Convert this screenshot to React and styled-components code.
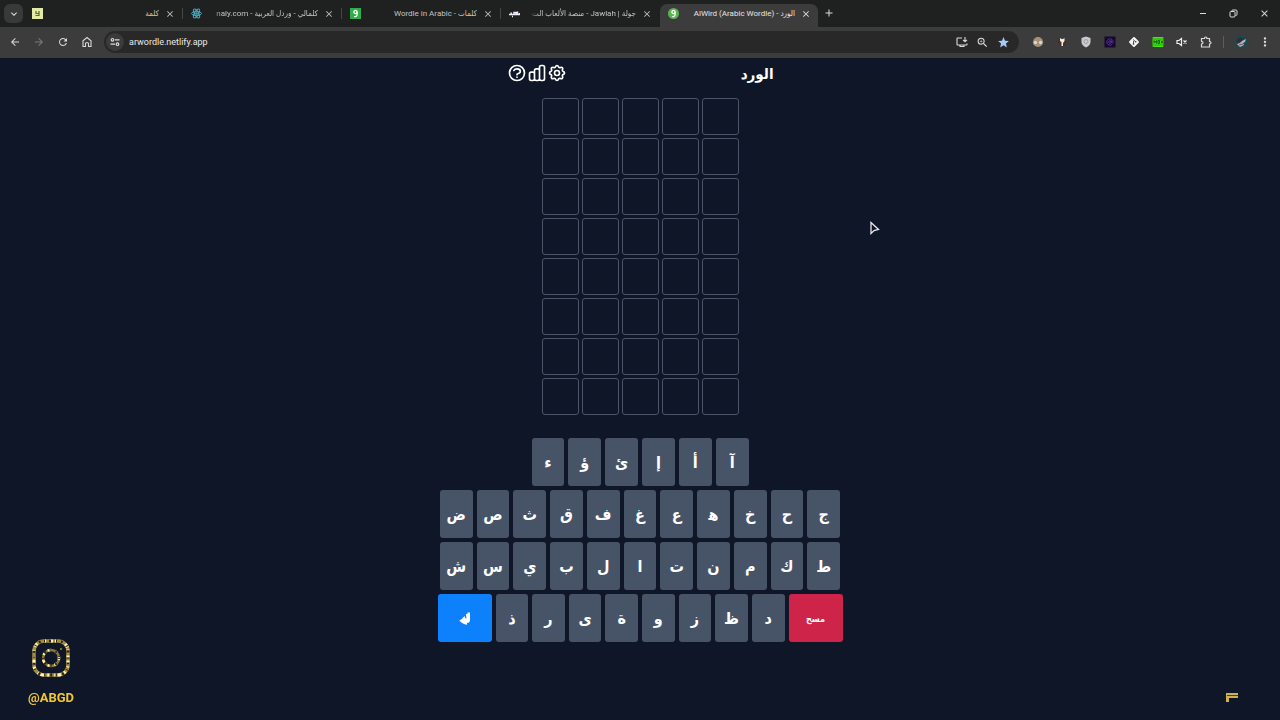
import React from 'react';
import styled, { createGlobalStyle } from 'styled-components';
import { HiOutlineCog, HiOutlineChartBar, HiOutlineQuestionMarkCircle } from 'react-icons/hi';
import {
    MdArrowBack,
    MdArrowForward,
    MdRefresh,
    MdClose,
    MdAdd,
    MdKeyboardArrowDown,
    MdOutlineZoomIn,
    MdStar,
    MdMoreVert
} from 'react-icons/md';

const GlobalStyle = createGlobalStyle`
    * {
        box-sizing: border-box;
    }
    body {
        margin: 0;
        background-color: #0f1627;
        font-family: "Noto Sans", "DejaVu Sans Condensed", "DejaVu Sans", sans-serif;
    }
    button {
        font-family: inherit;
        border: none;
        padding: 0;
        margin: 0;
        color: inherit;
        background: none;
        cursor: pointer;
    }
`

const Page = styled.div`
    min-height: 100vh;
    display: flex;
    flex-direction: column;
`

const TabStrip = styled.div`
    display: flex;
    align-items: flex-end;
    height: 27px;
    padding-left: 4px;
    background-color: #1f2020;
    color: #dcdcdc;
`

const TabSearch = styled.button`
    display: flex;
    align-items: center;
    justify-content: center;
    width: 19px;
    height: 19px;
    margin: 0 1px 4px 0;
    border-radius: 6px;
    background-color: #393939;
`

const Tab = styled.div`
    display: flex;
    align-items: center;
    gap: 6px;
    width: 158px;
    height: 23px;
    padding: 0 7px 4px 8px;
    border-radius: 7px 7px 0 0;
    background-color: ${props => props.$active ? "#3c3c3c" : "transparent"};
    color: ${props => props.$active ? "#e6e6e6" : "#c4c4c4"};
`

const TabDivider = styled.span`
    width: 1px;
    height: 11px;
    margin-bottom: 8px;
    background-color: ${props => props.$visible ? "#444444" : "transparent"};
`

const TabTitle = styled.span`
    flex: 1;
    min-width: 0;
    overflow: hidden;
    white-space: nowrap;
    direction: rtl;
    font-family: Roboto, "DejaVu Sans Condensed", "DejaVu Sans", sans-serif;
    font-size: 8px;
    line-height: 14px;
    mask-image: ${props => props.$fade ? "linear-gradient(to right, transparent, #000 14px)" : "none"};
`

const IconButton = styled.button`
    display: flex;
    align-items: center;
    justify-content: center;
    width: ${props => props.$width || 24}px;
    height: 20px;
    color: ${props => props.$dim ? "#7a7a7a" : "#dadada"};
`

const TabClose = styled.button`
    display: flex;
    width: 10px;
    height: 10px;
`

const NewTab = styled.button`
    display: flex;
    margin: 0 0 8px 4px;
`

const WindowControls = styled.div`
    display: flex;
    margin-left: auto;
    padding-bottom: 4px;
`

const Toolbar = styled.div`
    display: flex;
    align-items: center;
    height: 31px;
    padding: 0 3px 1px;
    background-color: #3c3c3c;
`

const AddressBar = styled.div`
    flex: 1;
    display: flex;
    align-items: center;
    height: 22px;
    margin: 0 7px 0 5px;
    padding: 0 5px 0 2px;
    border-radius: 11px;
    background-color: #282828;
`

const SiteInfo = styled.button`
    display: flex;
    align-items: center;
    justify-content: center;
    width: 18px;
    height: 18px;
    border-radius: 9px;
    background-color: #3b3b3b;
`

const Address = styled.input`
    flex: 1;
    min-width: 0;
    margin-left: 5px;
    padding: 0;
    border: none;
    outline: none;
    background: none;
    color: #e8e8e8;
    font-family: Roboto, "Noto Sans", sans-serif;
    font-size: 9px;
`

const ToolbarDivider = styled.span`
    width: 1px;
    height: 12px;
    margin: 0 5px;
    background-color: #5c5c5c;
`

const Game = styled.main`
    flex: 1;
    display: flex;
    flex-direction: column;
    align-items: center;
    padding-top: 4px;
`

const GameHeader = styled.header`
    display: flex;
    align-items: center;
    justify-content: space-between;
    width: 267px;
    height: 22px;
    color: #ffffff;
`

const Title = styled.h1`
    margin: 0;
    font-size: 15px;
    line-height: 24px;
    font-weight: bold;
`

const HeaderIcons = styled.div`
    display: flex;
`

const HeaderButton = styled.button`
    display: flex;
    font-size: 20px;
`

const Board = styled.div`
    display: grid;
    grid-template-columns: repeat(5, 37px);
    grid-auto-rows: 37px;
    gap: 3px;
    margin-top: 14px;
`

const Cell = styled.div`
    border: 1px solid #4b5567;
    border-radius: 3px;
`

const Keyboard = styled.div`
    display: flex;
    flex-direction: column;
    align-items: center;
    gap: 4px;
    margin-top: 23px;
`

const KeyRow = styled.div`
    display: flex;
    gap: 4px;
    width: ${props => props.$width}px;
`

const Key = styled.button`
    flex: ${props => props.$wide ? "0 0 54px" : "1 1 0"};
    display: flex;
    align-items: center;
    justify-content: center;
    height: 48px;
    border-radius: 3px;
    background-color: ${props => props.$color || "#475467"};
    color: #ffffff;
    font-size: ${props => props.$wide ? 9 : 16}px;
    font-weight: bold;
`

const Handle = styled.a`
    position: fixed;
    left: 28px;
    bottom: 12px;
    display: flex;
    flex-direction: column;
    align-items: center;
    gap: 11px;
    color: #f2c62f;
    font-family: Roboto, "Liberation Sans", sans-serif;
    font-size: 13px;
    line-height: 20px;
    font-weight: bold;
    text-decoration: none;
`

const CornerMark = styled.svg`
    position: fixed;
    right: 42px;
    bottom: 17px;
`

const Pointer = styled.svg`
    position: fixed;
    left: 869px;
    top: 221px;
`

const tabs = [
    { title: "كلمة", icon: "note", divider: true },
    { title: "كلمالي - وردل العربية - naly.com", icon: "react", divider: true, fade: true },
    { title: "كلمات - Wordle in Arabic", icon: "square", divider: true },
    { title: "جولة | Jawlah - منصة الألعاب الت", icon: "jawlah", fade: true },
    { title: "الورد - AlWird (Arabic Wordle)", icon: "round", active: true }
];

// rows are listed right to left, heh carries a joiner to get its initial form
const keyRows = [
    { width: 217, keys: ["آ", "أ", "إ", "ئ", "ؤ", "ء"] },
    { width: 400, keys: ["ج", "ح", "خ", "ه\u200D", "ع", "غ", "ف", "ق", "ث", "ص", "ض"] },
    { width: 400, keys: ["ط", "ك", "م", "ن", "ت", "ا", "ل", "ب", "ي", "س", "ش"] },
    { width: 405, keys: ["delete", "د", "ظ", "ز", "و", "ة", "ى", "ر", "ذ", "enter"] }
];

function Favicon({ name }) {
    switch (name) {
        case "note":
            return (
                <svg width="11" height="11" viewBox="0 0 11 11">
                    <rect width="11" height="11" fill="#e3eaa5" />
                    <path d="M4 3v2.5h3.2M7 3v4.5H3.5" fill="none" stroke="#5f6534" strokeWidth="1.2" />
                </svg>
            );
        case "react":
            return (
                <svg width="11" height="11" viewBox="0 0 22 22" fill="none" stroke="#4fa9bf" strokeWidth="2">
                    <ellipse cx="11" cy="11" rx="10" ry="4" />
                    <ellipse cx="11" cy="11" rx="10" ry="4" transform="rotate(60 11 11)" />
                    <ellipse cx="11" cy="11" rx="10" ry="4" transform="rotate(120 11 11)" />
                    <circle cx="11" cy="11" r="1.5" fill="#4fa9bf" />
                </svg>
            );
        case "jawlah":
            return (
                <svg width="11" height="11" viewBox="0 0 11 11" fill="none" stroke="#f1eafa" strokeWidth="1.5">
                    <path d="M0 6.5h10.5V5M2.5 6.5L2 4.5M5 7V4.5h2V7M8.5 6V3.5M3 8.5h1" />
                </svg>
            );
        default:
            return (
                <svg width="11" height="11" viewBox="0 0 11 11">
                    <rect width="11" height="11" rx={name === "round" ? 5.5 : 0} fill={name === "round" ? "#55b84f" : "#2fae4a"} />
                    <circle cx="5.5" cy="4" r="1.6" fill="none" stroke="#ffffff" strokeWidth="1.3" />
                    <path d="M7.1 4v2.4q0 2.4-3 2.2" fill="none" stroke="#ffffff" strokeWidth="1.3" />
                </svg>
            );
    }
}

function BrowserTab({ tab }) {
    return (
        <React.Fragment>
            <Tab $active={tab.active}>
                <Favicon name={tab.icon} />
                <TabTitle $fade={tab.fade}>{tab.title}</TabTitle>
                <TabClose aria-label="Close tab"><MdClose size={10} /></TabClose>
            </Tab>
            <TabDivider $visible={tab.divider} />
        </React.Fragment>
    );
}

function Extensions() {
    return (
        <React.Fragment>
            <IconButton aria-label="Glasses">
                <svg width="12" height="12" viewBox="0 0 12 12">
                    <circle cx="6" cy="6" r="5" fill="#b58f6c" />
                    <circle cx="3.5" cy="6.5" r="2.2" fill="#d6dad6" stroke="#85817a" strokeWidth=".8" />
                    <circle cx="8.5" cy="6.5" r="2.2" fill="#d6dad6" stroke="#85817a" strokeWidth=".8" />
                </svg>
            </IconButton>
            <IconButton aria-label="Badger">
                <svg width="12" height="12" viewBox="0 0 12 12">
                    <path d="M1.5 4l3-1 1 6.5-2 .5zM8.5 4l1.5 1-1 4.5-2 .5z" fill="#4b2f22" />
                    <path d="M4 2l1.5 1H7l1.5-1v3L7 7v3H5.5V6L4 5z" fill="#f0ece6" />
                </svg>
            </IconButton>
            <IconButton aria-label="Shield">
                <svg width="12" height="12" viewBox="0 0 12 12">
                    <path d="M6 .5L10.5 2v4c0 2.500-2 4.500-4.500 5.500C3.500 10.500 1.500 8.500 1.500 6V2z" fill="#c9cbce" />
                    <circle cx="6" cy="5.5" r="2" fill="none" stroke="#9b9ea3" />
                </svg>
            </IconButton>
            <IconButton aria-label="At sign">
                <svg width="12" height="12" viewBox="0 0 12 12">
                    <rect x=".5" y=".5" width="11" height="11" fill="#150a2c" />
                    <path d="M8 8.5A3.2 3.2 0 1 1 9.2 6c0 1.500-1.700 1.500-1.700 0V4.500" fill="none" stroke="#6537b5" strokeWidth=".8" />
                    <circle cx="6" cy="6" r="1.3" fill="none" stroke="#6537b5" strokeWidth=".8" />
                </svg>
            </IconButton>
            <IconButton aria-label="Diamond">
                <svg width="12" height="12" viewBox="0 0 12 12">
                    <rect x="2.2" y="2.2" width="7.6" height="7.6" rx="1" transform="rotate(45 6 6)" fill="#f4f4f4" />
                    <path d="M5 3.500l2.500 2M5.500 5v3" fill="none" stroke="#303030" strokeWidth=".8" />
                    <circle cx="5.5" cy="8" r=".8" fill="#303030" />
                    <circle cx="7.7" cy="5.8" r=".8" fill="#303030" />
                </svg>
            </IconButton>
            <IconButton aria-label="Box">
                <svg width="12" height="12" viewBox="0 0 12 12">
                    <rect x=".5" y="1" width="11" height="10" rx="1" fill="#41e80c" />
                    <path d="M0 3h12M0 9h12" stroke="#1f7a10" strokeWidth=".6" />
                    <path d="M2 7.500V4.500l1.300 2 1.300-2v3M6 4.500h1.500v3H6zM9 4.500l2 3M11 4.500l-2 3" fill="none" stroke="#10550b" strokeWidth=".9" />
                </svg>
            </IconButton>
            <IconButton aria-label="Mute">
                <svg width="12" height="12" viewBox="0 0 12 12" fill="none" stroke="#f0f0f0" strokeWidth="1.2">
                    <path d="M1 4.500h2L5.500 2.500v7L3 7.500H1zM7.500 4.500l3 3M10.500 4.500l-3 3" />
                </svg>
            </IconButton>
        </React.Fragment>
    );
}

function Browser() {
    return (
        <React.Fragment>
            <TabStrip>
                <TabSearch aria-label="Search tabs"><MdKeyboardArrowDown size={12} /></TabSearch>
                {tabs.map(tab => <BrowserTab key={tab.title} tab={tab} />)}
                <NewTab aria-label="New tab"><MdAdd size={12} /></NewTab>
                <WindowControls>
                    <IconButton $width={31} aria-label="Minimize">
                        <svg width="8" height="8" viewBox="0 0 8 8"><path d="M1 4.500h6" stroke="currentColor" /></svg>
                    </IconButton>
                    <IconButton $width={31} aria-label="Restore">
                        <svg width="9" height="9" viewBox="0 0 9 9" fill="none" stroke="currentColor">
                            <rect x="1" y="2.5" width="5" height="5.5" rx="1" />
                            <path d="M3 2.500V1.500q0-.5.5-.5H7q1 0 1 1v3.500q0 1-1.500 1" />
                        </svg>
                    </IconButton>
                    <IconButton $width={31} aria-label="Close"><MdClose size={11} /></IconButton>
                </WindowControls>
            </TabStrip>
            <Toolbar>
                <IconButton aria-label="Back"><MdArrowBack size={12} /></IconButton>
                <IconButton $dim aria-label="Forward"><MdArrowForward size={12} /></IconButton>
                <IconButton aria-label="Reload"><MdRefresh size={12} /></IconButton>
                <IconButton aria-label="Home">
                    <svg width="12" height="12" viewBox="0 0 12 12" fill="none" stroke="currentColor" strokeWidth="1.1">
                        <path d="M2 10.500V4.800L6 1.500l4 3.300v5.700H7.500V7.500q0-1-1.500-1t-1.500 1v3z" />
                    </svg>
                </IconButton>
                <AddressBar>
                    <SiteInfo aria-label="Site information">
                        <svg width="10" height="10" viewBox="0 0 10 10" fill="none" stroke="#dadada" strokeWidth="1.2">
                            <circle cx="2.5" cy="2.8" r="1.3" />
                            <circle cx="7.5" cy="7.2" r="1.3" />
                            <path d="M5 2.800h4.500M.5 7.200H5" />
                        </svg>
                    </SiteInfo>
                    <Address aria-label="Address" defaultValue="arwordle.netlify.app" />
                    <IconButton $width={21} aria-label="Install">
                        <svg width="12" height="12" viewBox="0 0 12 12" fill="none" stroke="currentColor" strokeWidth="1.1">
                            <path d="M6 2H1.500Q1 2 1 2.500v6q0 .5.5.5h9q.5 0 .5-.5V7.500M4 9v1.500h4V9M9 1v4.500M7 3.800l2 2 2-2" />
                        </svg>
                    </IconButton>
                    <IconButton $width={21} aria-label="Zoom"><MdOutlineZoomIn size={13} /></IconButton>
                    <IconButton $width={21} aria-label="Bookmark"><MdStar size={13} color="#a8c7fa" /></IconButton>
                </AddressBar>
                <Extensions />
                <IconButton aria-label="Extensions">
                    <svg width="12" height="12" viewBox="0 0 12 12" fill="none" stroke="currentColor" strokeWidth="1.2">
                        <path d="M1.500 2.500h3q0-1.500 1.200-1.500t1.200 1.500h2.600v3q1.500 0 1.500 1.200T9.500 8v3h-8V8q1.500-.2 1.500-1.300T1.500 5.300z" />
                    </svg>
                </IconButton>
                <ToolbarDivider />
                <IconButton aria-label="Profile">
                    <svg width="14" height="14" viewBox="0 0 14 14">
                        <circle cx="7" cy="7" r="6.5" fill="#1d4a50" />
                        <path d="M2 5l4-3 4 1-3 4-4 1z" fill="#2d3038" />
                        <path d="M3 9l3-1 2-2 4-2-1 3-2 1 1 2-4 2z" fill="#b9b4b8" />
                        <path d="M5 10l4-1" stroke="#7b4a52" />
                    </svg>
                </IconButton>
                <IconButton aria-label="Menu"><MdMoreVert size={14} /></IconButton>
            </Toolbar>
        </React.Fragment>
    );
}

function KeyButton({ value }) {
    if (value === "delete") {
        return <Key $wide $color="#cf2449">مسح</Key>;
    }
    if (value === "enter") {
        return (
            <Key $wide $color="#0d80fb" aria-label="Enter">
                <svg width="12" height="14" viewBox="0 0 12 14" fill="#ffffff">
                    <path d="M7 3h1.500V1.500H11V9q0 3-3 3v1.800Q3 13 .3 9.500 3.500 8 5.500 5L6.500 7.500q1.200 0 1-1.500L7 5z" />
                </svg>
            </Key>
        );
    }
    return <Key>{value}</Key>;
}

export default function App() {
    return (
        <Page>
            <GlobalStyle />
            <Browser />
            <Game>
                <GameHeader>
                    <HeaderIcons>
                        <HeaderButton aria-label="Help"><HiOutlineQuestionMarkCircle /></HeaderButton>
                        <HeaderButton aria-label="Statistics"><HiOutlineChartBar /></HeaderButton>
                        <HeaderButton aria-label="Settings"><HiOutlineCog /></HeaderButton>
                    </HeaderIcons>
                    <Title>الورد</Title>
                </GameHeader>
                <Board>
                    {Array.from({ length: 40 }, (_, i) => <Cell key={i} />)}
                </Board>
                <Keyboard dir="rtl">
                    {keyRows.map((row, i) => (
                        <KeyRow key={i} $width={row.width}>
                            {row.keys.map(value => <KeyButton key={value} value={value} />)}
                        </KeyRow>
                    ))}
                </Keyboard>
            </Game>
            <Handle href="#">
                <svg width="40" height="38" viewBox="0 0 40 38" fill="none">
                    <rect x="3" y="2" width="34" height="34" rx="10" stroke="#a58c3c" strokeWidth="3.5" />
                    <rect x="3" y="2" width="34" height="34" rx="10" stroke="#fff3b8" strokeWidth="3" strokeDasharray="2 3 4 2 1 5" />
                    <rect x="3" y="2" width="34" height="34" rx="10" stroke="#2a2719" strokeWidth="3" strokeDasharray="1 4 2 5" />
                    <circle cx="20" cy="19" r="8" stroke="#8d7833" strokeWidth="2.5" />
                    <circle cx="20" cy="19" r="8" stroke="#fff0a8" strokeWidth="2.5" strokeDasharray="2 4 3 5" />
                    <circle cx="20" cy="19" r="8" stroke="#2a2719" strokeWidth="2.5" strokeDasharray="1 5 2 4" />
                    <circle cx="30" cy="10" r="1" fill="#a58e3c" />
                </svg>
                @ABGD
            </Handle>
            <CornerMark width="12" height="10" viewBox="0 0 12 10">
                <path d="M0 0h12v5H3v4H0z" fill="#cdb04f" />
                <path d="M1 2.500h11" stroke="#4a3d16" />
            </CornerMark>
            <Pointer width="12" height="14" viewBox="0 0 12 14">
                <path d="M2 1.500v11l3-3 4.500-1z" fill="#14161f" stroke="#e6e8ee" strokeWidth="1.3" />
            </Pointer>
        </Page>
    );
}
